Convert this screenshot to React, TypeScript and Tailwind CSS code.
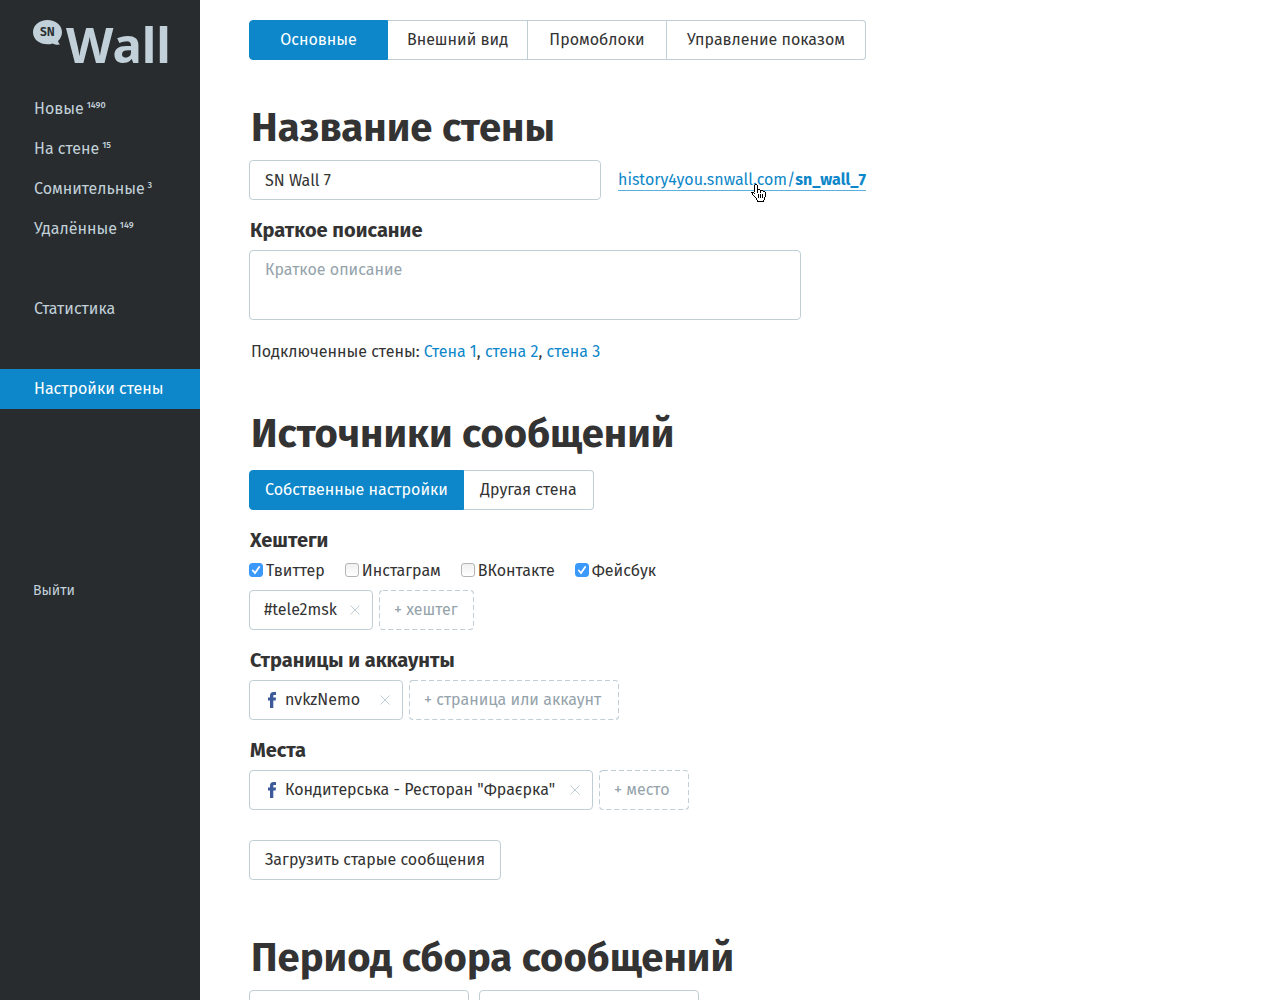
import { useState } from "react";
import type { ReactNode } from "react";
import clsx from "clsx";

const MENU = [
  { label: "Новые", count: 1490 },
  { label: "На стене", count: 15 },
  { label: "Сомнительные", count: 3 },
  { label: "Удалённые", count: 149 },
];

const TABS = ["Основные", "Внешний вид", "Промоблоки", "Управление показом"];
const SOURCES = ["Собственные настройки", "Другая стена"];

const NETWORKS = [
  { id: "tw", label: "Твиттер", on: true },
  { id: "ig", label: "Инстаграм", on: false },
  { id: "vk", label: "ВКонтакте", on: false },
  { id: "fb", label: "Фейсбук", on: true },
];

const FIELD = "rounded border border-[#c0ced6] bg-white text-[#333] outline-none";

function Logo() {
  return (
    <svg viewBox="0 -20 160 80" className="h-20 w-40" role="img" aria-label="SN Wall">
      <path
        fill="#c2d1d9"
        d="M14.500 0C22.500 0 29 5.200 29 12.200c0 3.600-1.600 6.500-4 8.700.3 1.400 1 2.500 2 3.600-2.800.4-5.400-.1-7.500-1.100-1.600.6-3.200.9-5 .9C6.500 24.300 0 19.200 0 12.200S6.500 0 14.500 0Z"
      />
      <text x="14.500" y="16" textAnchor="middle" fontSize="12" fontWeight="600" fill="#282c2f">
        SN
      </text>
      <text x="33" y="43" fontSize="49" fontWeight="700" fill="#c2d1d9" className="font-['Noto_Sans',sans-serif]">
        Wall
      </text>
    </svg>
  );
}

function Sidebar() {
  return (
    <aside className="w-[200px] shrink-0 bg-[#282c2f] text-[#c2d1d9]">
      <div className="pl-[33px]">
        <Logo />
      </div>
      <nav className="mt-[9px] leading-10">
        {MENU.map((m) => (
          <a key={m.label} href="#" className="flex h-10 pl-[34px]">
            {m.label}
            <span className="-mt-1 ml-[3px] text-[9px] font-medium">{m.count}</span>
          </a>
        ))}
        <a href="#" className="mt-10 block pl-[34px]">Статистика</a>
        <a href="#" className="mt-10 block bg-[#0d87c9] pl-[34px] text-white">Настройки стены</a>
        <a href="#" className="mt-[162px] block pl-[33px] text-sm leading-10">Выйти</a>
      </nav>
    </aside>
  );
}

function Segmented({ items, widths }: { items: string[]; widths: string[] }) {
  const [active, setActive] = useState(0);
  return (
    <div className="flex">
      {items.map((item, i) => (
        <button
          key={item}
          onClick={() => setActive(i)}
          className={clsx(
            "h-10 border-y border-r whitespace-nowrap first:rounded-l first:border-l last:rounded-r",
            widths[i],
            i === active ? "border-[#0d87c9] bg-[#0d87c9] text-white" : "border-[#c0ced6]",
          )}
        >
          {item}
        </button>
      ))}
    </div>
  );
}

function Chip({ children, facebook, className }: { children: ReactNode; facebook?: boolean; className: string }) {
  return (
    <div className={clsx(FIELD, "flex h-10 items-center pr-3 pl-[14px] whitespace-nowrap", className)}>
      {facebook && (
        <svg viewBox="0 0 9 16" className="mr-2 ml-1 h-4 w-[9px]" aria-hidden="true">
          <path fill="#3c5a99" d="M2 16V8.500H0V5.500h2V3.600C2 1.300 3.200 0 5.500 0H8v2.900H6.500c-1 0-1.200.4-1.200 1.200v1.400H8l-.3 3H5.300V16Z" />
        </svg>
      )}
      {children}
      <button aria-label="Удалить" className="ml-auto">
        <svg viewBox="0 0 10 10" className="h-[10px] w-[10px]" stroke="#c0ced6">
          <path d="M.5.5l9 9M9.500.5l-9 9" />
        </svg>
      </button>
    </div>
  );
}

function AddButton({ children, className }: { children: ReactNode; className: string }) {
  return (
    <button className={clsx("relative h-10 px-[15px] text-left whitespace-nowrap text-[#95a3ab]", className)}>
      {/* the outer half of the stroke is clipped, which leaves a 1px line */}
      <svg className="absolute inset-0 h-full w-full overflow-hidden rounded" aria-hidden="true">
        <rect width="100%" height="100%" rx="4" fill="none" stroke="#c0ced6" strokeWidth="2" strokeDasharray="5 3" />
      </svg>
      + {children}
    </button>
  );
}

function Checkbox({ id, label, on }: { id: string; label: string; on: boolean }) {
  return (
    <div className="flex items-center">
      <span className="relative flex">
        <input
          id={id}
          type="checkbox"
          defaultChecked={on}
          className="peer h-[14px] w-[14px] appearance-none rounded-[3px] border border-[#b4b4b4] bg-linear-to-b from-[#f0f0f0] to-white checked:border-[#3b99fc] checked:from-[#3b99fc] checked:to-[#3b99fc]"
        />
        <svg
          viewBox="0 0 14 14"
          className="pointer-events-none absolute inset-0 hidden peer-checked:block"
          fill="none"
          stroke="#fff"
          strokeWidth="1.800"
          strokeLinecap="round"
        >
          <path d="M3.800 7.500l2.200 2.500 4.200-6" />
        </svg>
      </span>
      <label htmlFor={id} className="pt-[2px] pl-[3px] leading-5">{label}</label>
    </div>
  );
}

function HandCursor() {
  return (
    <svg
      viewBox="0 0 16 18"
      className="pointer-events-none absolute top-[14px] left-[133px] h-[18px] w-4"
      shapeRendering="crispEdges"
      aria-hidden="true"
    >
      <path
        fill="#000"
        d="M4 0h2v1h1v4h2v1h3v1h2v1h1v5h-1v3h-1v2H6v-2H5v-2H4v-1H3v-1H2v-1H1v-2H0V8h3v1h1V8H3V1h1Z"
      />
      <path
        fill="#fff"
        d="M4 1h2v5h3v1h3v1h2v5h-1v3h-1v1H7v-1H6v-2H5v-1H4v-1H3v-1H2v-2H1V9h2v1h1Z"
      />
      <path fill="#000" d="M7 10h1v4H7zM9 10h1v4H9zM11 10h1v4h-1zM6 6h1v3H6zM9 7h1v2H9z" />
    </svg>
  );
}

function Title({ children, className }: { children: ReactNode; className?: string }) {
  return <h1 className={clsx("pl-[2px] text-[40px] leading-[64px] font-bold whitespace-nowrap", className)}>{children}</h1>;
}

function Subtitle({ children }: { children: ReactNode }) {
  return <h2 className="mt-4 mb-[6px] pl-px text-[20px] leading-7 font-bold">{children}</h2>;
}

export default function App() {
  return (
    <div className="flex h-screen bg-white font-['Fira_Sans','Noto_Sans',sans-serif] text-[16px] text-[#333]">
      <Sidebar />
      <main className="flex-1 overflow-y-auto pt-5 pb-10 pl-[49px] [scrollbar-width:none]">
        <Segmented items={TABS} widths={["w-[139px]", "w-[140px]", "w-[139px]", "w-[199px]"]} />

        <section className="mt-9">
          <Title>Название стены</Title>
          <div className="flex items-center gap-[17px]">
            <input aria-label="Название стены" defaultValue="SN Wall 7" className={clsx(FIELD, "h-10 w-[352px] px-[15px]")} />
            <a href="#" className="relative border-b border-[#5cb0dd] leading-5 text-[#0d87c9]">
              history4you.snwall.com/<b>sn_wall_7</b>
              <HandCursor />
            </a>
          </div>
          <Subtitle>
            <label htmlFor="about">Краткое поисание</label>
          </Subtitle>
          <textarea
            id="about"
            placeholder="Краткое описание"
            className={clsx(FIELD, "block h-[70px] w-[552px] resize-none px-[15px] py-[7px] placeholder:text-[#95a3ab]")}
          />
          <p className="mt-5 pl-[2px] leading-6">
            Подключенные стены: <a href="#" className="text-[#0d87c9]">Стена 1</a>,{" "}
            <a href="#" className="text-[#0d87c9]">стена 2</a>, <a href="#" className="text-[#0d87c9]">стена 3</a>
          </p>
        </section>

        <section className="mt-[38px]">
          <Title className="mb-1">Источники сообщений</Title>
          <Segmented items={SOURCES} widths={["w-[215px]", "w-[130px]"]} />

          <Subtitle>Хештеги</Subtitle>
          <div className="mb-[10px] flex h-5 items-center gap-5">
            {NETWORKS.map((n) => (
              <Checkbox key={n.id} {...n} />
            ))}
          </div>
          <div className="flex gap-[6px]">
            <Chip className="min-w-[124px]">#tele2msk</Chip>
            <AddButton className="min-w-[95px]">хештег</AddButton>
          </div>

          <Subtitle>Страницы и аккаунты</Subtitle>
          <div className="flex gap-[6px]">
            <Chip facebook className="min-w-[154px]">nvkzNemo</Chip>
            <AddButton className="min-w-[210px]">страница или аккаунт</AddButton>
          </div>

          <Subtitle>Места</Subtitle>
          <div className="flex gap-[6px]">
            <Chip facebook className="min-w-[344px]">Кондитерська - Ресторан "Фраєрка"</Chip>
            <AddButton className="min-w-[90px]">место</AddButton>
          </div>

          <button className={clsx(FIELD, "mt-[30px] h-10 min-w-[252px] px-[14px]")}>Загрузить старые сообщения</button>
        </section>

        <section className="mt-[46px]">
          <Title>Период сбора сообщений</Title>
          <div className="flex gap-[10px]">
            <input aria-label="Начало периода" className={clsx(FIELD, "h-10 w-[220px] px-[15px]")} />
            <input aria-label="Конец периода" className={clsx(FIELD, "h-10 w-[220px] px-[15px]")} />
          </div>
        </section>
      </main>
    </div>
  );
}
